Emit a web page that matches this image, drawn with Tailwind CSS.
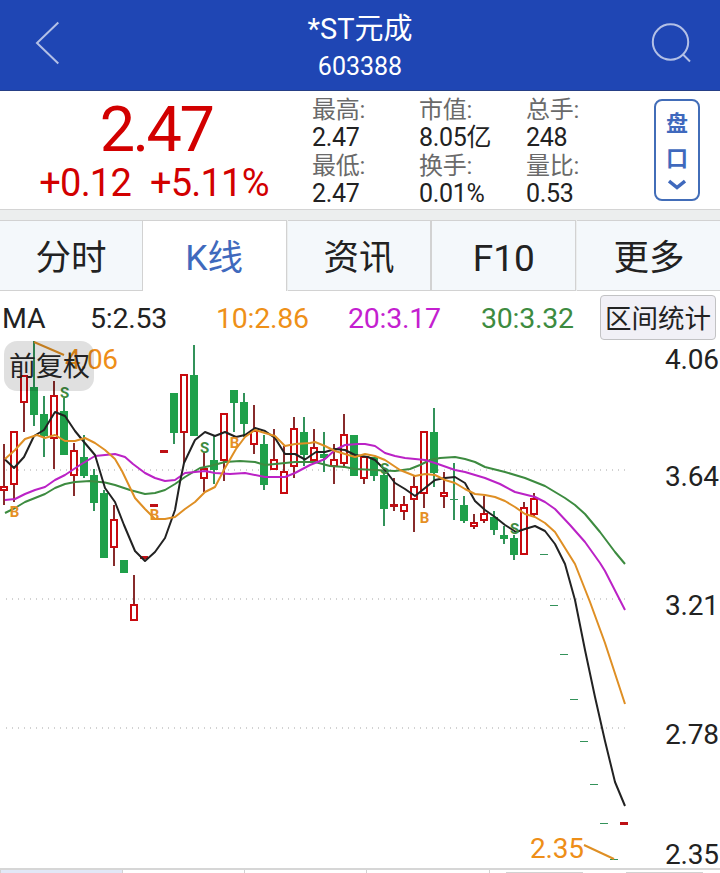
<!DOCTYPE html>
<html lang="zh-CN">
<head>
    <meta charset="UTF-8">
    <meta name="viewport" content="width=device-width, initial-scale=1.0">
    <title>*ST元成 603388</title>
    <script src="https://cdn.jsdelivr.net/npm/@tailwindcss/browser@4"></script>
</head>
<body class="w-[720px] h-[873px] overflow-hidden bg-white font-['Roboto','Noto_Sans_CJK_SC',sans-serif] text-[#222]">
    <!--Begin title bar-->
    <header class="flex justify-between h-[91px] bg-[#1f46b4] border-b border-[#263f86] text-white">
        <button class="w-[100px] pl-[35px]">
            <svg class="block -mt-1" width="26" height="44" viewBox="0 0 26 44" fill="none" stroke="#b3c0e6" stroke-width="2"><path d="M23.300 1.500L2 22L23.300 42.500"/></svg>
        </button>
        <div class="text-center pt-[9px]">
            <h1 class="text-[29px] leading-[41px] h-10">*ST元成</h1>
            <p class="text-[25px] leading-9">603388</p>
        </div>
        <button class="w-[100px] pl-[31px]">
            <svg class="block -mt-1" width="42" height="42" viewBox="0 0 42 42" fill="none" stroke="#b3c0e6" stroke-width="2"><circle cx="19.500" cy="20" r="17.700"/><path d="M31.500 32L39 39.500"/></svg>
        </button>
    </header>

    <!--Begin quote summary-->
    <section class="flex h-[119px] border-b border-[#d4d4d4]">
        <div class="w-[312px] text-[#d20000] text-center">
            <p class="text-[63px] leading-[78px] h-[72px] tracking-[-2.6px]">2.47</p>
            <p class="flex justify-center gap-[19px] pr-1 text-[38px] leading-[40px] tracking-[-0.8px]"><span>+0.12</span><span>+5.11%</span></p>
        </div>
        <div class="grid grid-cols-[107px_107px_101px] grid-rows-4 h-28 mt-[5px] text-[25px] leading-7 tracking-[-0.3px] whitespace-nowrap">
            <span class="text-[24px] text-[#6a6a6a]">最高:</span>
            <span class="text-[24px] text-[#6a6a6a]">市值:</span>
            <span class="text-[24px] text-[#6a6a6a]">总手:</span>
            <span>2.47</span>
            <span>8.05亿</span>
            <span>248</span>
            <span class="text-[24px] text-[#6a6a6a]">最低:</span>
            <span class="text-[24px] text-[#6a6a6a]">换手:</span>
            <span class="text-[24px] text-[#6a6a6a]">量比:</span>
            <span>2.47</span>
            <span>0.01%</span>
            <span>0.53</span>
        </div>
        <button class="flex flex-col items-center w-[46px] h-[102px] mt-2 ml-[27px] pt-[5px] border-2 border-[#426db8] rounded-lg text-[#3f69bd] font-bold text-[22px] leading-[35px]">
            <span>盘</span>
            <span>口</span>
            <svg class="mt-[3px]" width="18" height="11" viewBox="0 0 18 11" fill="none" stroke="#3f69bd" stroke-width="3.500"><path d="M1 2L9 8.500L17 2"/></svg>
        </button>
    </section>

    <!--Begin tabs-->
    <nav class="flex h-[81px] pt-[10px] bg-[#eceeee] text-[35.500px] leading-[75px] text-center whitespace-nowrap">
        <a class="w-[143px] h-[71px] bg-[#f4f8fb] border-t border-r border-b border-[#d2d2d2]">分时</a>
        <a class="w-[144px] h-[71px] bg-white border-t border-r border-[#d2d2d2] text-[#3f69bd]">K线</a>
        <a class="w-[144px] h-[71px] ml-px bg-[#f4f8fb] border-t border-r border-b border-[#d2d2d2]">资讯</a>
        <a class="w-[145px] h-[71px] bg-[#f4f8fb] border-t border-x border-b border-[#d2d2d2] text-[37px]">F10</a>
        <a class="w-[143px] h-[71px] ml-px pl-px bg-[#f4f8fb] border-t border-b border-[#d2d2d2]">更多</a>
    </nav>

    <!--Begin moving average legend-->
    <div class="flex items-start h-[49px] pl-[2px] text-[28.500px] leading-[55px] tracking-[-0.25px] whitespace-nowrap">
        <span class="w-[88px]">MA</span>
        <span class="w-[126px]">5:2.53</span>
        <span class="w-[132px] text-[#ee9018]">10:2.86</span>
        <span class="w-[133px] text-[#c41fd0]">20:3.17</span>
        <span class="w-[119px] text-[#3d8b40]">30:3.32</span>
        <button class="w-[116px] h-[45px] mt-1 bg-[#f1f0f6] border border-[#c2c2c4] rounded text-[26.500px] leading-[45px] tracking-normal text-center">区间统计</button>
    </div>

    <!--Begin candlestick chart-->
    <main class="relative h-[528px]">
        <svg class="block" width="720" height="528" viewBox="0 340 720 528">
            <g stroke="#d2d2d2" stroke-width="2" stroke-dasharray="1 5">
                <path d="M6 470H626"/>
                <path d="M6 599H626"/>
                <path d="M6 728H626"/>
            </g>
            <g id="candles"></g>
            <g id="averages" fill="none" stroke-width="2" stroke-linejoin="round"></g>
            <g id="signals" font-size="15" font-weight="700" text-anchor="middle"></g>
            <g stroke="#df8f24" stroke-width="2">
                <path d="M34 342L64 355"/>
                <path d="M584 845L614 859"/>
            </g>
            <g font-size="28" fill="#ee8e18">
                <text x="65" y="369" textLength="53">4.06</text>
                <text x="530" y="858" textLength="54">2.35</text>
            </g>
            <g font-size="28" fill="#222">
                <text x="665" y="369" textLength="54">4.06</text>
                <text x="665" y="486" textLength="54">3.64</text>
                <text x="665" y="615" textLength="54">3.21</text>
                <text x="665" y="744" textLength="54">2.78</text>
                <text x="665" y="864" textLength="54">2.35</text>
            </g>
        </svg>
        <span class="absolute left-1 top-px w-[90px] h-[50px] pl-px rounded-[13px] bg-black/12 text-[27px] leading-[53px] text-center whitespace-nowrap">前复权</span>
    </main>

    <!--Begin period bar, cut off by the screen edge-->
    <footer class="h-[5px] border-t-2 border-[#d6d6d6]">
        <div class="flex h-[3px]">
            <span class="w-[123px] bg-[#e2e8f7] border-x border-[#d2d2d2]"></span>
            <span class="w-[122px] border-r border-[#d2d2d2]"></span>
            <span class="w-[122px] border-r border-[#d2d2d2]"></span>
            <span class="w-[123px] border-r border-[#d2d2d2]"></span>
            <span class="w-[77px] ml-4 mt-[2px] bg-[#d2d2d2]"></span>
            <span class="w-[77px] ml-[43px] mt-[2px] bg-[#d2d2d2]"></span>
        </div>
    </footer>

    <script>
        (() => {
            'use strict'

            // one candle every 10px: [kind, high, body top, body bottom, low]
            const candles = [
                ['r', 444, 486, 491, 505], ['r', 431, 431, 485, 502], ['r', 375, 375, 403, 432],
                ['g', 341, 387, 415, 426], ['g', 396, 414, 436, 457], ['r', 381, 395, 439, 469],
                ['g', 398, 411, 455, 455], ['r', 443, 450, 476, 496], ['g', 435, 457, 476, 478],
                ['g', 469, 475, 503, 511], ['g', 490, 493, 558, 558], ['r', 505, 519, 548, 566],
                ['g', 560, 560, 573, 573], ['r', 575, 604, 621, 621], ['r', 556, 556, 559, 559],
                ['r', 504, 504, 507, 507], ['r', 450, 450, 453, 453], ['g', 393, 393, 433, 444],
                ['r', 374, 374, 433, 463], ['g', 345, 375, 436, 436], ['r', 452, 468, 479, 492],
                ['g', 436, 460, 470, 484], ['r', 413, 413, 461, 481], ['g', 390, 390, 403, 432],
                ['g', 393, 402, 424, 437], ['r', 405, 430, 445, 454], ['g', 435, 444, 485, 490],
                ['r', 429, 459, 470, 470], ['r', 446, 471, 494, 494], ['r', 417, 428, 467, 478],
                ['g', 417, 432, 455, 466], ['r', 429, 447, 461, 461], ['g', 432, 454, 458, 472],
                ['r', 444, 459, 467, 484], ['r', 414, 434, 464, 468], ['g', 435, 435, 476, 476],
                ['r', 456, 456, 479, 484], ['g', 457, 457, 476, 481], ['g', 470, 475, 509, 526],
                ['r', 478, 504, 507, 511], ['r', 496, 504, 512, 520], ['r', 476, 486, 500, 532],
                ['r', 431, 431, 494, 508], ['g', 408, 432, 473, 487], ['r', 472, 492, 497, 508],
                ['g', 463, 499, 500, 520], ['g', 496, 505, 521, 523], ['r', 514, 522, 527, 529],
                ['r', 496, 513, 521, 523], ['g', 511, 517, 530, 535], ['g', 526, 535, 539, 544],
                ['g', 535, 538, 555, 560], ['r', 502, 507, 555, 555], ['r', 493, 498, 515, 517],
                ['g', 554, 554, 555, 555], ['g', 605, 605, 606, 606], ['g', 654, 654, 655, 655],
                ['g', 699, 699, 700, 700], ['g', 741, 741, 742, 742], ['g', 784, 784, 785, 785],
                ['g', 823, 823, 824, 824], ['g', 859, 859, 860, 860], ['r', 822, 822, 825, 825],
            ]

            const rect = (x, y, w, h, attrs) => `<rect x="${x}" y="${y}" width="${w}" height="${h}" ${attrs}/>`

            document.getElementById('candles').innerHTML = candles.map(([kind, high, top, bottom, low], i) => {
                const x = i * 10
                const wick = kind === 'r' ? 'fill="#872b2b"' : 'fill="#33925a"'
                let out = ''
                if (top > high) out += rect(x + 3, high, 2, top - high, wick)
                if (low > bottom) out += rect(x + 3, bottom, 2, low - bottom, wick)
                if (kind === 'g') {
                    out += rect(x, top, 8, bottom - top, bottom - top > 1 ? 'fill="#1fa04a"' : wick)
                } else if (bottom - top < 4) {
                    out += rect(x, top, 8, bottom - top, 'fill="#bd1015"')
                } else {
                    // rising candles are hollow
                    out += rect(x + 1, top + 1, 6, bottom - top - 2, 'fill="#fff" stroke="#c80a0f" stroke-width="2"')
                }
                return out
            }).join('')

            const averages = {
                '#3d8b40': '5,513 15,508 25,502 35,498 45,494 55,488 65,484 75,482 90,481 105,482.5 115,485 130,490 145,494 155,493 165,490 175,484 185,477 200,468 210,466 225,462 240,461 255,462 265,465 275,464 295,462 305,462 315,462 330,466 345,467 355,469 375,470 395,471 410,469 420,465 430,460 440,458 455,457 465,459 475,462 485,467 505,472 525,478 545,486 565,498 575,505 585,514 600,532 615,552 625,564',
                '#bb22c6': '5,500 15,499 25,494 35,490 45,487 55,480 65,475 80,465 95,456 115,454 125,457 133,464 145,473 155,478 165,481 175,480 185,473 205,471 215,473 230,474 245,473 265,477 285,477 295,473 310,465 325,459 335,450 345,445 358,444 365,444 375,446 385,453 395,456 405,458 425,460 435,463 455,470 465,472 485,478 500,484 515,492 535,497 545,502 555,509 570,525 585,542 600,563 605,571 625,610',
                '#222': '5,459.5 14,468 24,457 34,436 44,430 55,412 65,416 75,431 84,442 95,455 105,488 115,502 124,525 135,551 145,561 155,552 165,538 175,510 180,482 184,463 195,440 205,432 215,436 225,432 236,437 245,435 255,428 265,431 275,438 285,454 295,454 305,459.5 316,452 325,452 335,449 345,450 355,455 368,457 375,460 385,470 395,483 405,489 415,496 425,488 435,480 445,478 455,477 465,483 475,501 485,510 495,517 505,525 516,532 525,529 535,526 545,531 555,544 565,564 575,600 585,650 595,697 605,741 615,782 625,806',
                '#df8f24': '5,459 15,450 25,439 37,435 45,438 55,435 65,441 75,441 85,438 95,443 105,450 115,459 122,471 135,498 145,509 155,519 165,519 175,517 185,509 195,502 205,492 215,487 225,468 236,449 245,437 255,430 265,433 275,436 285,446 295,444 310,443 315,442 325,446 335,451 345,454 355,457 365,454 375,456 385,460 400,470 415,476 425,474 435,475 445,480 455,483 465,489 475,494 485,495 495,497 505,501 515,507 525,514 535,517 545,523 555,532 565,548 575,564 590,602 605,643 625,704',
            }
            document.getElementById('averages').innerHTML = Object.entries(averages)
                .map(([color, points]) => `<polyline stroke="${color}" points="${points}"/>`).join('')

            // buy and sell marks: [letter, x, baseline]
            const signals = [
                ['S', 64.5, 398], ['S', 204.5, 453], ['S', 384.5, 474], ['S', 514.5, 534],
                ['B', 14.5, 517], ['B', 154.5, 520], ['B', 234.5, 447.5], ['B', 424.5, 523],
            ]
            document.getElementById('signals').innerHTML = signals
                .map(([letter, x, y]) => `<text x="${x}" y="${y}" fill="${letter === 'S' ? '#3d8b40' : '#e58f24'}">${letter}</text>`).join('')
        })()
    </script>
</body>
</html>
